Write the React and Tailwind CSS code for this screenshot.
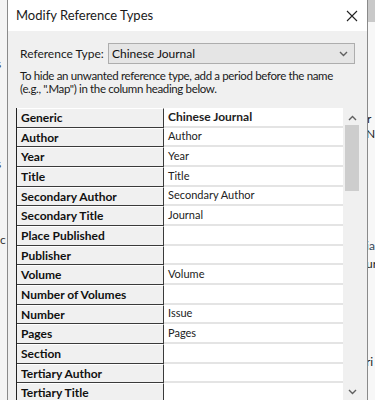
import React from "react";

const rows = [
  { label: "Generic", value: "Chinese Journal", head: true, h: 20 },
  { label: "Author", value: "Author", h: 19 },
  { label: "Year", value: "Year", h: 20 },
  { label: "Title", value: "Title", h: 20 },
  { label: "Secondary Author", value: "Secondary Author", h: 19 },
  { label: "Secondary Title", value: "Journal", h: 20 },
  { label: "Place Published", value: "", h: 20 },
  { label: "Publisher", value: "", h: 19 },
  { label: "Volume", value: "Volume", h: 20 },
  { label: "Number of Volumes", value: "", h: 20 },
  { label: "Number", value: "Issue", h: 19 },
  { label: "Pages", value: "Pages", h: 20 },
  { label: "Section", value: "", h: 20 },
  { label: "Tertiary Author", value: "", h: 19 },
  { label: "Tertiary Title", value: "", h: 20 },
];

const ui = { fontFamily: 'Lato, "Liberation Sans", sans-serif' };

const Chevron = ({ up }) => (
  <svg width="9" height="6" viewBox="0 0 9 6" className={up ? "rotate-180" : ""}>
    <path d="M1 1l3.5 3.5L8 1" fill="none" stroke="#606060" strokeWidth="1.4" />
  </svg>
);

export default function App() {
  return (
    <div className="w-[375px] h-[400px] overflow-hidden flex bg-[#f4f4f4]" style={ui}>
      {/* window behind, left edge */}
      <div className="w-[7px] shrink-0 overflow-hidden flex flex-col text-[12px] text-[#333] leading-none">
        <span className="mt-[58px] -ml-[4px]">s</span>
        <span className="mt-[88px] -ml-[4px]">s</span>
        <span className="mt-[64px] -ml-[3px]">ic</span>
      </div>

      {/* dialog */}
      <div className="w-[361px] shrink-0 flex flex-col overflow-hidden border-x border-[#8a8a8a] bg-[#f0f0f0]">
        <div className="h-[31px] shrink-0 bg-white flex items-center justify-between pl-[8px] pr-[9px]">
          <span className="text-[13px] text-[#1a1a1a] whitespace-nowrap">Modify Reference Types</span>
          <svg width="12" height="12" viewBox="0 0 12 12">
            <path d="M1 1l10 10M11 1L1 11" stroke="#222" strokeWidth="1.1" />
          </svg>
        </div>

        <div className="flex shrink-0 items-center pl-[12px] pr-[12px] mt-[12px] h-[21px]">
          <span className="text-[12px] text-[#1a1a1a] w-[88px] whitespace-nowrap">Reference Type:</span>
          <div className="flex-1 h-[21px] bg-[#e5e5e5] border border-[#adadad] flex items-center justify-between pl-[3px] pr-[6px]">
            <span className="text-[12px] text-[#111]">Chinese Journal</span>
            <Chevron />
          </div>
        </div>

        <p className="shrink-0 pl-[12px] mt-[5px] text-[11.5px] tracking-[-0.35px] leading-[13px] text-[#1a1a1a] whitespace-nowrap">
          To hide an unwanted reference type, add a period before the name
          <br />
          (e.g., ".Map") in the column heading below.
        </p>

        <div className="flex shrink-0 ml-[8px] mt-[13px]">
          <div className="w-[327px] flex flex-col border-l border-[#222]">
            {rows.map((r) => (
              <div key={r.label} className="flex shrink-0" style={{ height: r.h }}>
                <div className="w-[147px] shrink-0 bg-[#f0f0f0] border-r border-b border-[#3a3a3a] border-t border-t-white flex items-center pl-[4px] text-[12px] font-bold text-[#111] whitespace-nowrap">
                  {r.label}
                </div>
                <div
                  className={`flex-1 bg-white border-b-2 border-[#e4e4e4] flex items-center pl-[4px] text-[11px] text-[#222] ${
                    r.head ? "font-bold text-[#111] text-[12px]" : ""
                  }`}
                >
                  {r.value}
                </div>
              </div>
            ))}
          </div>
          <div className="w-[18px] flex flex-col items-center bg-[#f0f0f0] pt-[7px]">
            <Chevron up />
            <div className="w-[14px] h-[66px] bg-[#cdcdcd] mt-[4px]" />
            <div className="flex-1" />
            <div className="mb-[8px]">
              <Chevron />
            </div>
          </div>
        </div>
      </div>

      {/* window behind, right edge */}
      <div className="flex-1 flex flex-col bg-[#f7f7f7] overflow-hidden text-[12px] text-[#222] leading-none">
        <div className="h-[22px] shrink-0 bg-[#c9c9c9]" />
        <span className="mt-[91px] -ml-[1px]">r</span>
        <span className="mt-[3px] -ml-[2px]">N</span>
        <span className="mt-[100px] -ml-[2px] text-[#345]">ia</span>
        <span className="mt-[6px] -ml-[2px]">ur</span>
        <span className="mt-[86px] -ml-[2px]">ri</span>
      </div>
    </div>
  );
}
